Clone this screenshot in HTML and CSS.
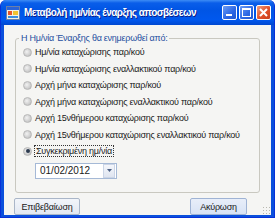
FILE: index.html
```html
<!DOCTYPE html>
<html lang="el">
    <head>
        <meta charset="UTF-8">
        <title>Μεταβολή ημ/νίας έναρξης αποσβέσεων</title>
        <link rel="stylesheet" href="styles.css">
    </head>
    <body>
        <div class="window">
            <header class="titleBar">
                <svg class="appIcon" width="14" height="14" viewBox="0 0 14 14">
                    <rect x="0.5" y="0.5" width="13" height="13" fill="#f4f1e4" stroke="#6b7fa8"/>
                    <rect x="1" y="1" width="12" height="3" fill="#2a63d8"/>
                    <rect x="2" y="5" width="4" height="4" fill="#e8562a"/>
                    <rect x="7" y="5" width="5" height="4" fill="#f2c230"/>
                    <rect x="2" y="10" width="10" height="2" fill="#3c8ee0"/>
                </svg>
                <span class="titleText">Μεταβολή ημ/νίας έναρξης αποσβέσεων</span>
                <div class="titleButtons">
                    <span class="tbtn">
                        <svg width="15" height="15" viewBox="0 0 15 15"><rect x="4" y="9" width="6" height="2" fill="#fff"/></svg>
                    </span>
                    <span class="tbtn">
                        <svg width="15" height="15" viewBox="0 0 15 15"><rect x="3.5" y="3.5" width="8" height="8" fill="none" stroke="#fff"/><rect x="3" y="3" width="9" height="2" fill="#fff"/></svg>
                    </span>
                    <span class="tbtn close">
                        <svg width="15" height="15" viewBox="0 0 15 15"><path d="M4 4 L11 11 M11 4 L4 11" stroke="#fff" stroke-width="2"/></svg>
                    </span>
                </div>
            </header>

            <main class="client">
                <fieldset class="groupBox">
                    <legend>Η Ημ/νία Έναρξης θα ενημερωθεί από:</legend>
                    <label class="option"><span class="radio"></span>Ημ/νία καταχώρισης παρ/κού</label>
                    <label class="option"><span class="radio"></span>Ημ/νία καταχώρισης εναλλακτικού παρ/κού</label>
                    <label class="option"><span class="radio"></span>Αρχή μήνα καταχώρισης παρ/κού</label>
                    <label class="option"><span class="radio"></span>Αρχή μήνα καταχώρισης εναλλακτικού παρ/κού</label>
                    <label class="option"><span class="radio"></span>Αρχή 15νθήμερου καταχώρισης παρ/κού</label>
                    <label class="option"><span class="radio"></span>Αρχή 15νθήμερου καταχώρισης εναλλακτικού παρ/κού</label>
                    <label class="option"><span class="radio checked"></span><span class="focused">Συγκεκριμένη ημ/νία</span></label>
                    <div class="datePicker">
                        <span class="dateValue">01/02/2012</span>
                        <span class="dropButton">
                            <svg width="5" height="3" viewBox="0 0 5 3"><path d="M0 0 H5 L2.5 3 Z" fill="#4d6185"/></svg>
                        </span>
                    </div>
                </fieldset>

                <div class="actions">
                    <button>Επιβεβαίωση</button>
                    <button class="cancel">Ακύρωση</button>
                </div>
                <span class="grip"></span>
            </main>
        </div>
    </body>
</html>
```

FILE: styles.css
```css
body {
    margin: 0;
    padding: 0;
    font-family: "Liberation Sans", Arial, sans-serif;
    background-color: #ffffff;
}

.window {
    width: 275px;
    height: 218px;
    box-sizing: border-box;
    display: flex;
    flex-direction: column;
    background-color: #0b50dc;
    border: 1px solid #0831d9;
    border-top: none;
    border-radius: 6px 6px 0 0;
    overflow: hidden;
}

.titleBar {
    height: 25px;
    flex-shrink: 0;
    display: flex;
    align-items: center;
    padding: 0 3px 0 5px;
    background: linear-gradient(#3d8cf5 0%, #0a5ee9 12%, #0055e5 40%, #0058ee 80%, #0048d0 100%);
}

.appIcon {
    margin-right: 4px;
}

.titleText {
    flex: 1;
    color: #ffffff;
    font-family: "Liberation Sans", Arial, sans-serif;
    font-weight: bold;
    font-size: 10px;
    letter-spacing: -0.55px;
    text-shadow: 1px 1px 0 #0a1e8a;
    white-space: nowrap;
}

.titleButtons {
    display: flex;
    gap: 2px;
}

.tbtn {
    width: 15px;
    height: 15px;
    box-sizing: border-box;
    border: 1px solid #ffffff;
    border-radius: 2px;
    background: linear-gradient(135deg, #6c9df5, #2a66e4 60%, #2358d0);
    display: flex;
    align-items: center;
    justify-content: center;
}

.tbtn svg {
    margin: -1px;
}

.tbtn.close {
    background: linear-gradient(135deg, #f0a080, #e0502a 55%, #c8401c);
}

.client {
    position: relative;
    flex: 1;
    margin: 0 3px 4px;
    background: #f5f5f3;
    font-size: 9px;
    letter-spacing: -0.25px;
    color: #1a1a1a;
}

.groupBox {
    margin: 8px 11px 0 11px;
    padding: 1px 0 6px 7px;
    height: 160px;
    box-sizing: border-box;
    border: 1px solid #c9c8c0;
    border-radius: 3px;
}

.groupBox legend {
    padding: 0 2px;
    margin-left: -4px;
    color: #1f4fa0;
}

.option {
    display: flex;
    align-items: center;
    height: 16.5px;
    white-space: nowrap;
}

.radio {
    flex-shrink: 0;
    width: 9px;
    height: 9px;
    margin-right: 3px;
    border-radius: 50%;
    background: radial-gradient(circle at 40% 40%, #f2f2f2, #c8c8c8 70%, #a8a8a8);
    box-sizing: border-box;
    border: 1px solid #b8b8b8;
    position: relative;
}

.radio.checked::after {
    content: "";
    position: absolute;
    left: 1.5px;
    top: 1.5px;
    width: 4px;
    height: 4px;
    border-radius: 50%;
    background: #2c3a4e;
}

.focused {
    outline: 1px dotted #333333;
    padding: 0 1px;
}

.datePicker {
    margin: 3px 0 0 12px;
    width: 82px;
    height: 16px;
    box-sizing: border-box;
    display: flex;
    align-items: center;
    border: 1px solid #a5b9d6;
    background: #ffffff;
}

.dateValue {
    flex: 1;
    padding-left: 4px;
    font-size: 10px;
    letter-spacing: 0;
}

.dropButton {
    width: 10px;
    height: 12px;
    margin-right: 1px;
    display: flex;
    align-items: center;
    justify-content: center;
    background: linear-gradient(#f4f6fb, #dfe5f0);
    border: 1px solid #cbd5e6;
}

.actions {
    display: flex;
    justify-content: space-between;
    margin: 5px 24px 0 10px;
}

.actions button {
    height: 17px;
    padding: 0;
    width: 66px;
    font-family: "Liberation Sans", Arial, sans-serif;
    font-size: 9px;
    letter-spacing: -0.2px;
    color: #1a1a1a;
    border: 1px solid #aab6c8;
    border-radius: 2px;
    background: linear-gradient(#f2f5fa, #e2e8f2);
}

.actions .cancel {
    width: 57px;
    background: linear-gradient(#e8eef9, #d8e3f5);
    border-color: #9fb3d4;
}

.grip {
    position: absolute;
    right: 1px;
    bottom: 1px;
    width: 8px;
    height: 8px;
    background: radial-gradient(circle, #b8b8b0 0.8px, transparent 1px) 0 0 / 3px 3px;
}
```
